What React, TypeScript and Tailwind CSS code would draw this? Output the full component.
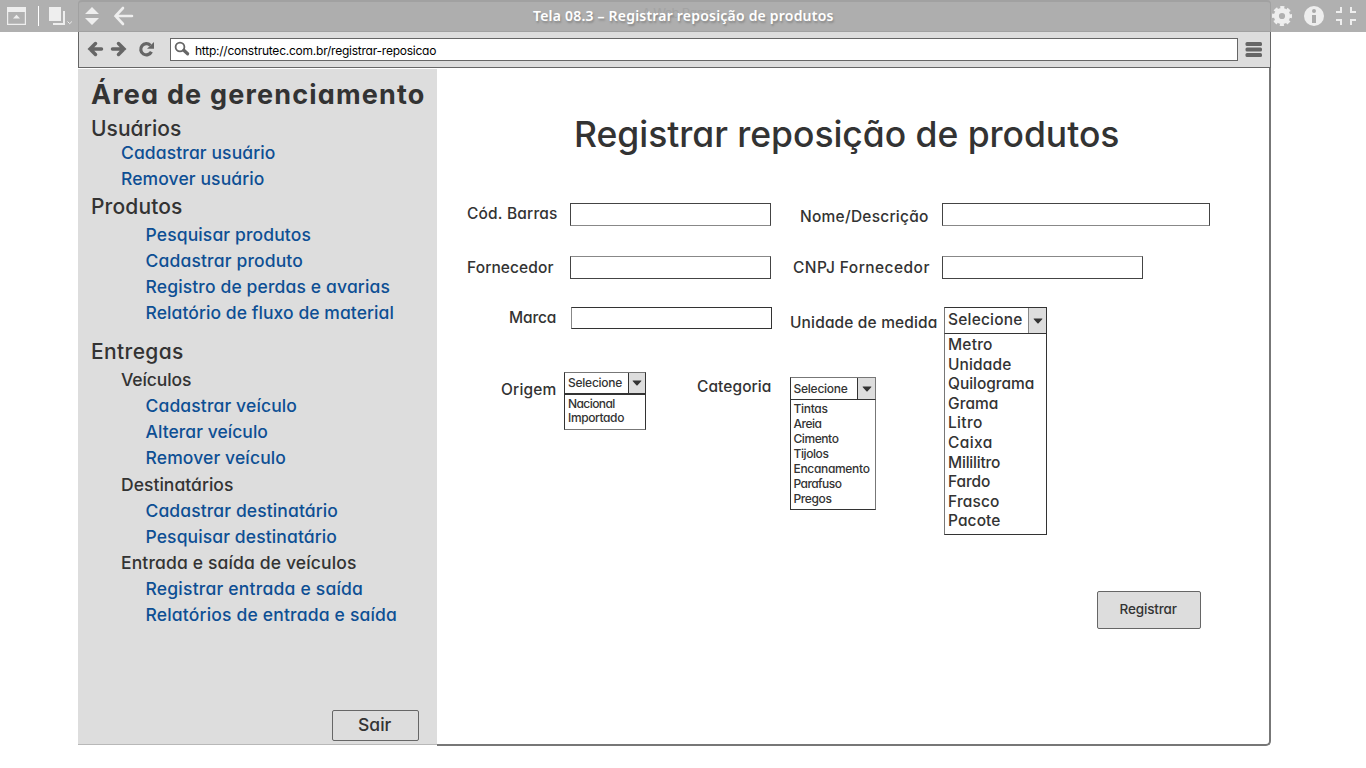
import { useLayoutEffect, useRef } from "react";

/** Single line of text whose tracking is adjusted to fill the width of its box. */
function Fit({ children, className = "" }: { children: string; className?: string }) {
  const box = useRef<HTMLSpanElement>(null);
  const inner = useRef<HTMLSpanElement>(null);
  useLayoutEffect(() => {
    if (!box.current || !inner.current) return;
    inner.current.style.letterSpacing = "0px";
    const free = box.current.clientWidth - inner.current.getBoundingClientRect().width;
    inner.current.style.letterSpacing = `${(free - 0.6) / (children.length - 1)}px`;
  }, [children]);
  return (
    <span ref={box} className={`block shrink-0 whitespace-nowrap ${className}`}>
      <span ref={inner}>{children}</span>
    </span>
  );
}

const menu = [
  { text: "Usuários", cls: "mt-[9px] ml-[13px] h-[25px] w-[91px] text-[21px] leading-[25px]" },
  { text: "Cadastrar usuário", link: true, cls: "ml-[43px] h-[23px] w-[155px] leading-[23px]" },
  { text: "Remover usuário", link: true, cls: "ml-[43px] h-[29px] w-[144px] leading-[29px]" },
  { text: "Produtos", cls: "ml-[13px] h-[27px] w-[92px] text-[21px] leading-[27px]" },
  { text: "Pesquisar produtos", link: true, cls: "mt-[1.5px] ml-[67.5px] h-[26px] w-[166px] leading-[26px]" },
  { text: "Cadastrar produto", link: true, cls: "ml-[67.5px] h-[26px] w-[158px] leading-[26px]" },
  { text: "Registro de perdas e avarias", link: true, cls: "ml-[67.5px] h-[26px] w-[245px] leading-[26px]" },
  { text: "Relatório de fluxo de material", link: true, cls: "ml-[67.5px] h-[26px] w-[249px] leading-[26px]" },
  { text: "Entregas", cls: "mt-[13px] ml-[13px] h-[26px] w-[93px] text-[21px] leading-[26px]" },
  { text: "Veículos", cls: "mt-[2.5px] ml-[43px] h-[26px] w-[71px] leading-[26px]" },
  { text: "Cadastrar veículo", link: true, cls: "ml-[67.5px] h-[26px] w-[152px] leading-[26px]" },
  { text: "Alterar veículo", link: true, cls: "ml-[67.5px] h-[26px] w-[123px] leading-[26px]" },
  { text: "Remover veículo", link: true, cls: "ml-[67.5px] h-[26px] w-[141px] leading-[26px]" },
  { text: "Destinatários", cls: "mt-[0.5px] ml-[43px] h-[26px] w-[113px] leading-[26px]" },
  { text: "Cadastrar destinatário", link: true, cls: "ml-[67.5px] h-[26px] w-[193px] leading-[26px]" },
  { text: "Pesquisar destinatário", link: true, cls: "ml-[67.5px] h-[26px] w-[192px] leading-[26px]" },
  { text: "Entrada e saída de veículos", cls: "ml-[43px] h-[26px] w-[236px] leading-[26px]" },
  { text: "Registrar entrada e saída", link: true, cls: "ml-[67.5px] h-[26px] w-[218px] leading-[26px]" },
  { text: "Relatórios de entrada e saída", link: true, cls: "ml-[67.5px] h-[26px] w-[252px] leading-[26px]" },
];

const unidades: [string, string][] = [
  ["Metro", "w-[45px]"],
  ["Unidade", "w-[64px]"],
  ["Quilograma", "w-[87px]"],
  ["Grama", "w-[51px]"],
  ["Litro", "w-[35px]"],
  ["Caixa", "w-[45px]"],
  ["Mililitro", "w-[53px]"],
  ["Fardo", "w-[43px]"],
  ["Frasco", "w-[52px]"],
  ["Pacote", "w-[53px]"],
];

const categorias: [string, string][] = [
  ["Tintas", "w-[35px]"],
  ["Areia", "w-[29px]"],
  ["Cimento", "w-[46px]"],
  ["Tijolos", "w-[36px]"],
  ["Encanamento", "w-[77px]"],
  ["Parafuso", "w-[49px]"],
  ["Pregos", "w-[39px]"],
];

const origens: [string, string][] = [
  ["Nacional", "w-[48px]"],
  ["Importado", "w-[57px]"],
];

function Caret() {
  return (
    <svg width="10" height="6" viewBox="0 0 10 6" fill="#333">
      <path d="M1 0.5H9Q9.8 .7 9.2 1.3L5.6 5.2Q5 5.8 4.4 5.2L.8 1.3Q.2 .7 1 .5Z" />
    </svg>
  );
}

function Header() {
  return (
    <header className="flex h-8 bg-[#b0b0b0]">
      <div className="flex w-[78px] shrink-0">
        <svg width="78" height="32" fill="#eee">
          <path d="M7 7H26V25H7ZM8.2 12V23.8H24.8V12Z" fillRule="evenodd" />
          <path d="M13 18.6L16.5 14.8L20 18.6Z" />
          <rect x="38" y="6" width="1" height="20" fill="#fff" />
          <path d="M49 7H61V21H49Z" />
          <path d="M63 11H65V25H53V23H63Z" />
          <path d="M67.5 21.5L69.7 23.7L71.9 21.5" fill="none" stroke="#eee" />
        </svg>
      </div>
      <div className="relative flex w-[1193px] shrink-0 justify-between rounded-t-[4px] border-x border-t-2 border-b border-[#a1a1a1] bg-[#aeaeae]">
        <svg width="60" height="29" viewBox="79 2 60 29" fill="#eee">
          <path d="M85 14L92 7L99 14ZM85 18H99L92 25Z" />
          <path d="M123 8L115.5 16L123 24M115.5 16H132" fill="none" stroke="#eee" strokeWidth="2.6" strokeLinecap="round" />
        </svg>
        <span className="absolute top-[3px] left-[563px] text-[13px] leading-[16px] tracking-[-0.7px] text-[#a3a3a3]">A Web Page</span>
        <div className="absolute top-[4px] left-[454px] font-['Noto_Sans'] text-[14px] leading-[20px] font-semibold text-white [text-shadow:1px_2px_2px_#888]">
          <Fit className="w-[301px]">Tela 08.3 – Registrar reposição de produtos</Fit>
        </div>
      </div>
      <svg width="95" height="32" viewBox="1271 0 95 32" fill="#eee">
        <g transform="translate(1282 16)">
          <circle r="5.6" fill="none" stroke="#eee" strokeWidth="5" />
          <circle r="8.3" fill="none" stroke="#eee" strokeWidth="3.4" strokeDasharray="3.9 2.62" strokeDashoffset="1.95" />
        </g>
        <circle cx="1314" cy="16" r="10" />
        <circle cx="1314" cy="11" r="2" fill="#aaa" />
        <path d="M1312 15H1316V23H1312Z" fill="#aaa" />
        <path d="M1341 7V12H1336M1351 7V12H1356M1336 20H1341V25M1356 20H1351V25" fill="none" stroke="#eee" strokeWidth="2" />
      </svg>
    </header>
  );
}

function Toolbar() {
  return (
    <div className="flex h-9 border-x border-b border-[#666] bg-[#ddd] pt-1.5">
      <svg width="91" height="24" viewBox="79 38 91 24" fill="none" stroke="#666" strokeWidth="3.5" strokeLinecap="round">
        <path d="M95.5 43.5L90 49L95.5 54.5M90 49H101.5" />
        <path d="M118.5 43.5L124 49L118.5 54.5M124 49H112.5" />
        <path d="M150.4 45.4A5.6 5.6 0 1 0 151.4 51.7" strokeWidth="3.2" strokeLinecap="butt" />
        <path d="M154 42V48.8H147Z" fill="#666" stroke="none" />
      </svg>
      <div className="flex h-[23px] w-[1068px] items-center border border-[#666] bg-white">
        <svg width="24" height="21" viewBox="171 39 24 21" fill="none" stroke="#666">
          <circle cx="180" cy="47" r="4.4" strokeWidth="1.8" />
          <path d="M183.8 50.3L187.6 53.8" strokeWidth="3.2" strokeLinecap="round" />
        </svg>
        <Fit className="mt-[2px] w-[242px] text-[12px] leading-[18px] text-black">http://construtec.com.br/registrar-reposicao</Fit>
      </div>
      <svg className="ml-[7px]" width="18" height="24" viewBox="1245 38 18 24" fill="#666">
        <rect x="1245.5" y="42" width="16.5" height="4" rx="1.5" />
        <rect x="1245.5" y="47.5" width="16.5" height="4" rx="1.5" />
        <rect x="1245.5" y="53" width="16.5" height="4" rx="1.5" />
      </svg>
    </div>
  );
}

function Sidebar() {
  return (
    <aside className="mt-px flex h-[676px] w-[359px] shrink-0 flex-col border-b border-[#b8b8b8] bg-[#ddd] text-[17.5px] font-medium">
      <Fit className="mt-[13px] ml-[13px] h-[25px] w-[334px] text-[27px] leading-[25px] font-bold">Área de gerenciamento</Fit>
      {menu.map((m) => (
        <Fit key={m.text} className={`${m.cls} ${m.link ? "text-[#0d4f94]" : ""}`}>
          {m.text}
        </Fit>
      ))}
      <button className="mt-[82px] ml-[254px] flex h-[31px] w-[87px] justify-center rounded-[2px] border border-[#666]">
        <Fit className="-ml-px w-[34px] text-left leading-[28px]">Sair</Fit>
      </button>
    </aside>
  );
}

function Form() {
  return (
    <main className="flex w-[834px] flex-col rounded-br-[5px] border-r-2 border-b-2 border-[#777] pl-px text-[15.5px] leading-[22px] font-medium">
      <Fit className="mt-[46px] ml-[136px] h-[41px] w-[546px] text-[35.5px] leading-[41px]">Registrar reposição de produtos</Fit>

      <div className="mt-[48px] flex h-[53px] pl-[29px]">
        <Fit className="w-[91px]">Cód. Barras</Fit>
        <div className="ml-[12px] h-[23px] w-[201px] border border-[#444] border-b-[#888]" />
        <Fit className="mt-[3px] ml-[29px] w-[129px]">Nome/Descrição</Fit>
        <div className="ml-[13px] h-[23px] w-[268px] border border-[#444] border-b-[#888]" />
      </div>

      <div className="flex h-[51px] pl-[29px]">
        <Fit className="mt-px w-[87px]">Fornecedor</Fit>
        <div className="ml-[16px] h-[23px] w-[201px] border border-[#444] border-t-[#888]" />
        <Fit className="mt-px ml-[22px] w-[137px]">CNPJ Fornecedor</Fit>
        <div className="ml-[12px] h-[23px] w-[201px] border border-[#444] border-t-[#888]" />
      </div>

      <div className="flex h-[65px] pl-[71px]">
        <Fit className="w-[48px]">Marca</Fit>
        <div className="ml-[14px] h-[22px] w-[201px] border border-[#333] border-l-[#888]" />
        <Fit className="mt-[5px] ml-[18px] w-[148px]">Unidade de medida</Fit>
        <div className="relative ml-[6px] flex h-[27px] w-[103px] border border-[#333] border-l-[#777]">
          <Fit className="mt-px ml-[3px] w-[75px]">Selecione</Fit>
          <div className="ml-auto flex w-[18px] items-center justify-center border-l border-[#888] bg-[#ddd]">
            <Caret />
          </div>
          <div className="absolute top-[26px] -left-px h-[201px] w-[103px] border border-t-0 border-[#333] border-l-[#777] bg-white pt-[1.3px] pl-[3px] text-[15.5px] leading-[19.55px]">
            {unidades.map(([t, w]) => (
              <Fit key={t} className={w}>{t}</Fit>
            ))}
          </div>
        </div>
      </div>

      <div className="flex h-[219px] pl-[63px] text-[12px] leading-[20px]">
        <Fit className="mt-[7px] w-[56px] text-[15.5px] leading-[22px]">Origem</Fit>
        <div className="relative ml-[7px] flex h-[22px] w-[82px] border border-[#333] border-t-[#777]">
          <Fit className="ml-[3px] w-[55px]">Selecione</Fit>
          <div className="ml-auto flex w-[17px] items-center justify-center border-l border-[#333] bg-[#ddd]">
            <Caret />
          </div>
          <div className="absolute top-[20px] -left-px h-[37px] w-[82px] border border-t-2 border-[#333] border-b-[#777] bg-white pt-[2px] pl-[3px] leading-[14px]">
            {origens.map(([t, w]) => (
              <Fit key={t} className={w}>{t}</Fit>
            ))}
          </div>
        </div>
        <Fit className="mt-[4px] ml-[51px] w-[75px] text-[15.5px] leading-[22px]">Categoria</Fit>
        <div className="relative mt-[5px] ml-[18px] flex h-[23px] w-[86px] border border-[#333] border-t-[#777] border-r-[#777]">
          <Fit className="mt-px ml-[2.5px] w-[55px]">Selecione</Fit>
          <div className="ml-auto flex w-[18px] items-center justify-center border-l border-[#333] bg-[#ddd]">
            <Caret />
          </div>
          <div className="absolute top-[22px] -left-px h-[110px] w-[86px] border border-t-0 border-[#333] border-r-[#777] bg-white pt-[1px] pl-[2.5px] leading-[15px]">
            {categorias.map(([t, w]) => (
              <Fit key={t} className={w}>{t}</Fit>
            ))}
          </div>
        </div>
      </div>

      <button className="ml-[659px] flex h-[38px] w-[104px] justify-center rounded-[2px] border border-[#666] bg-[#ddd]">
        <Fit className="-ml-px w-[58px] text-left text-[13.5px] leading-[35px]">Registrar</Fit>
      </button>
    </main>
  );
}

export default function App() {
  return (
    <div className="h-[768px] w-[1366px] overflow-hidden bg-white font-['Inter','Liberation_Sans',sans-serif] text-[#333] [font-feature-settings:'cv11','calt'_0]">
      <Header />
      <div className="ml-[78px] w-[1193px]">
        <Toolbar />
        <div className="flex h-[678px]">
          <Sidebar />
          <Form />
        </div>
      </div>
    </div>
  );
}
